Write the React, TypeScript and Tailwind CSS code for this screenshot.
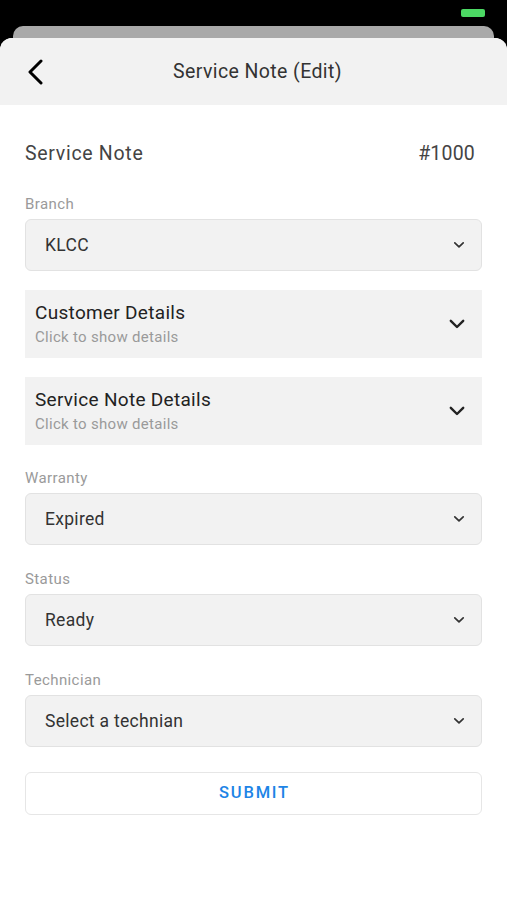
import React from "react";

function SmallChevron() {
  return (
    <svg width="12" height="8" viewBox="0 0 12 8" fill="none">
      <path d="M1.8 1.8 L6 5.8 L10.2 1.8" stroke="#333" strokeWidth="1.7" strokeLinecap="round" strokeLinejoin="round" />
    </svg>
  );
}

function BigChevron() {
  return (
    <svg width="16" height="10" viewBox="0 0 16 10" fill="none">
      <path d="M1.8 1.8 L8 8 L14.2 1.8" stroke="#222" strokeWidth="2.4" strokeLinecap="round" strokeLinejoin="round" />
    </svg>
  );
}

function Select({ value }: { value: string }) {
  return (
    <div className="h-[52px] flex items-center justify-between rounded-[6px] border border-[#e2e2e2] bg-[#f2f2f2] pl-[19px] pr-[16px]">
      <span className="text-[17.5px] text-[#333] tracking-[0.3px]">{value}</span>
      <SmallChevron />
    </div>
  );
}

function Label({ text }: { text: string }) {
  return <div className="h-[20px] leading-[20px] text-[15px] text-[#9a9a9a] mb-[5px] tracking-[0.4px]">{text}</div>;
}

function Accordion({ title }: { title: string }) {
  return (
    <div className="h-[68px] bg-[#f2f2f2] flex items-center justify-between pl-[10px] pr-[17px]">
      <div className="flex flex-col">
        <span className="text-[19px] leading-[22px] text-[#222] tracking-[0.3px]">{title}</span>
        <span className="text-[15px] leading-[20px] text-[#9a9a9a] mt-[3px] tracking-[0.3px]">Click to show details</span>
      </div>
      <BigChevron />
    </div>
  );
}

export default function App() {
  return (
    <div className="w-[507px] h-[900px] bg-black flex flex-col" style={{ fontFamily: "Roboto, 'Noto Sans', sans-serif" }}>
      <div className="h-[26px] relative shrink-0">
        <div className="absolute left-[461px] top-[9px] w-[24px] h-[8px] rounded-[2px] bg-[#4cd964]" />
      </div>
      <div className="mx-[13px] h-[20px] -mb-[8px] rounded-t-[10px] bg-[#a9a9a9] shrink-0" />
      <div className="flex-1 relative bg-white rounded-t-[12px] overflow-hidden flex flex-col">
        <div className="h-[67px] bg-[#f2f2f2] flex items-center relative shrink-0">
          <div className="absolute left-[26px] top-[21px]">
            <svg width="20" height="26" viewBox="0 0 20 26" fill="none">
              <path d="M15 2 L4 13 L15 24" stroke="#000" strokeWidth="3" strokeLinecap="round" strokeLinejoin="round" />
            </svg>
          </div>
          <div className="w-full text-center text-[19.5px] text-[#333] tracking-[0.4px] pl-[8px]">Service Note (Edit)</div>
        </div>
        <div className="px-[25px] flex flex-col">
          <div className="mt-[35px] h-[28px] flex items-center justify-between text-[19.5px] text-[#444]">
            <span className="tracking-[0.7px]">Service Note</span>
            <span className="pr-[7px] tracking-[0.2px]">#1000</span>
          </div>
          <div className="mt-[26px]">
            <Label text="Branch" />
            <Select value="KLCC" />
          </div>
          <div className="mt-[19px]">
            <Accordion title="Customer Details" />
          </div>
          <div className="mt-[19px]">
            <Accordion title="Service Note Details" />
          </div>
          <div className="mt-[23px]">
            <Label text="Warranty" />
            <Select value="Expired" />
          </div>
          <div className="mt-[24px]">
            <Label text="Status" />
            <Select value="Ready" />
          </div>
          <div className="mt-[24px]">
            <Label text="Technician" />
            <Select value="Select a technian" />
          </div>
          <div className="mt-[25px] h-[43px] rounded-[6px] border border-[#e6e6e6] bg-white flex items-center justify-center">
            <span className="text-[16.5px] font-medium text-[#1d84e6] tracking-[1.8px] pl-[2px]">SUBMIT</span>
          </div>
        </div>
      </div>
    </div>
  );
}
